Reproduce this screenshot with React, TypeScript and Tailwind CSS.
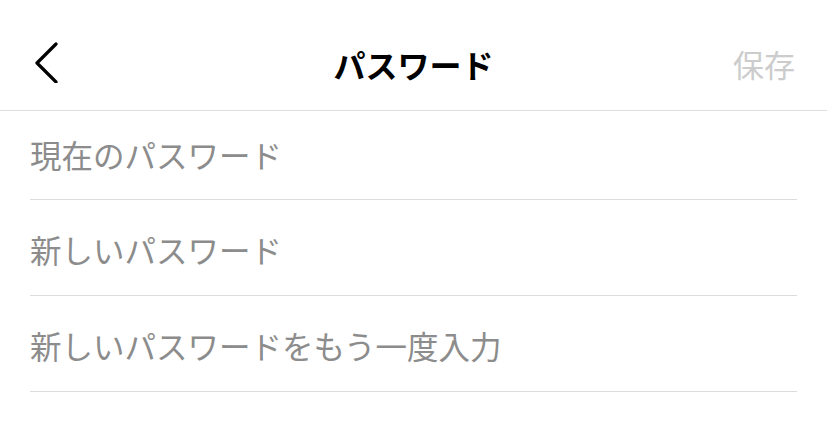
const fields = ["現在のパスワード", "新しいパスワード", "新しいパスワードをもう一度入力"];

export default function App() {
  return (
    <div
      className="h-[427px] w-[827px] overflow-hidden bg-white"
      style={{ fontFamily: '"Noto Sans CJK JP", "Noto Sans", sans-serif' }}
    >
      {/* Header */}
      <header className="relative flex h-[111px] items-center justify-center border-b border-[#dedede]">
        <button className="absolute left-[33px] top-[41px]">
          <svg width="28" height="42" viewBox="0 0 28 42" fill="none">
            <path d="M23 3 L4 22 L23 41" stroke="#000" strokeWidth="3.2" strokeLinecap="round" strokeLinejoin="round" />
          </svg>
        </button>
        <h1 className="mt-[18px] text-[32px] font-bold leading-none text-black">パスワード</h1>
        <button className="absolute right-[32px] top-[48px] text-[31px] leading-none text-[#cccccc]">保存</button>
      </header>

      {/* Fields */}
      <div className="mx-[30px]">
        {fields.map((f, i) => (
          <div
            key={f}
            className={`flex items-end border-b border-[#dcdcdc] ${i === 0 ? "h-[89px] pb-[25px]" : "h-[96px] pb-[26px]"}`}
          >
            <span className="text-[31.5px] leading-[40px] text-[#8c8c8c]">{f}</span>
          </div>
        ))}
      </div>
    </div>
  );
}
